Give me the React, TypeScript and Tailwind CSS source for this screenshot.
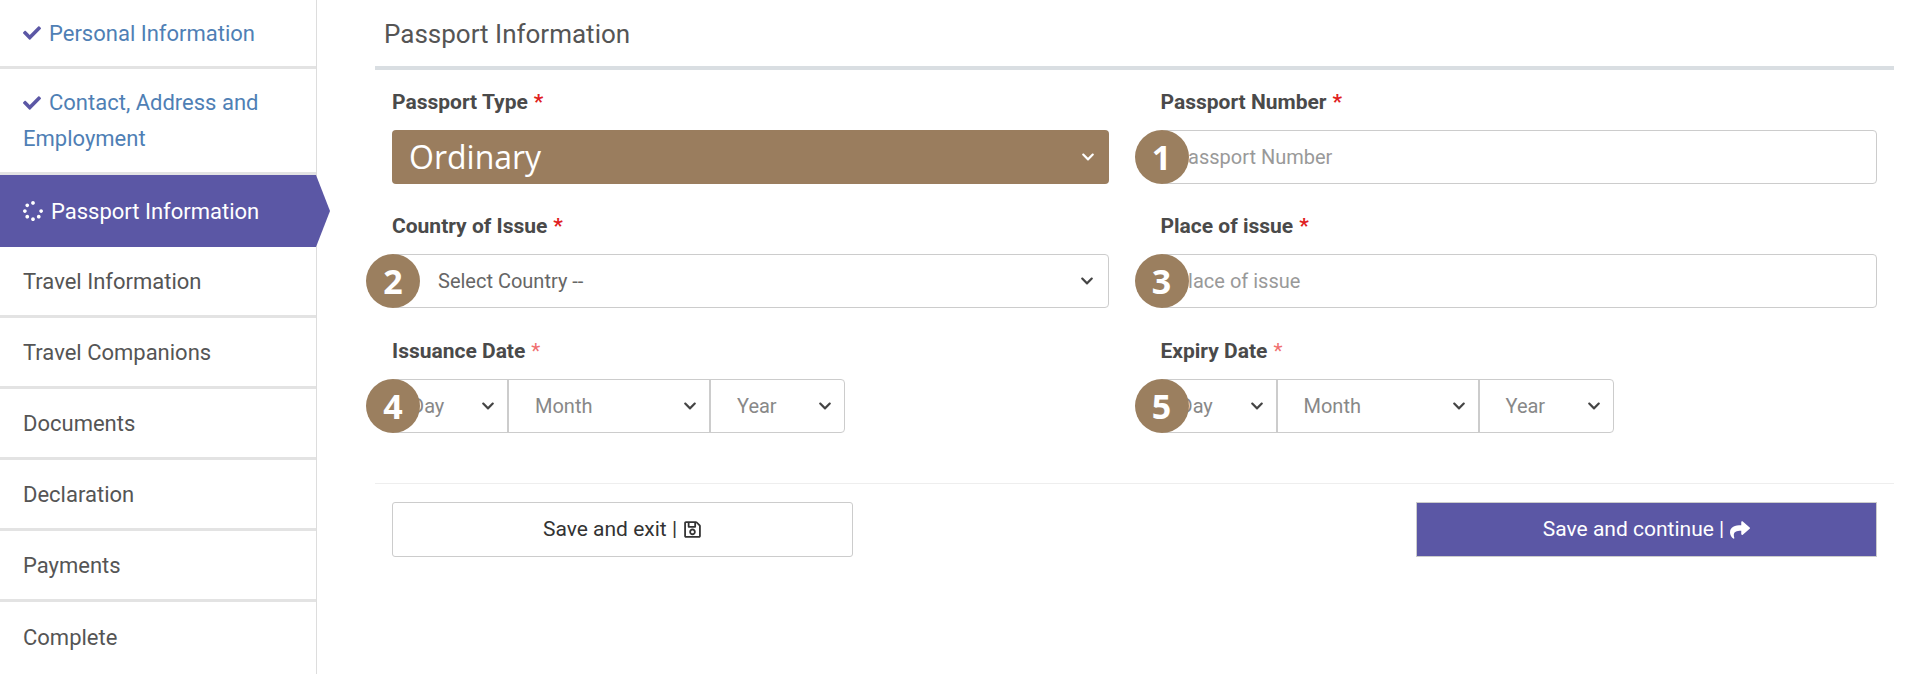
import React from "react";
import { FaCheck, FaSpinner, FaRegSave, FaShare, FaChevronDown } from "react-icons/fa";

const Badge = ({ n }: { n: number }) => (
  <div className="absolute left-0 top-1/2 -translate-x-1/2 -translate-y-1/2 w-[54px] h-[54px] rounded-full bg-[#9b7f5f] flex items-center justify-center text-white text-[34px] font-bold z-10" style={{ fontFamily: "'Open Sans', sans-serif" }}>
    {n}
  </div>
);

const Label = ({ t, light }: { t: string; light?: boolean }) => (
  <div className="h-[54px] flex items-center text-[21px] font-bold text-[#4a4a4a]">
    {t}
    <span className={`ml-[6px] ${light ? "text-[#f07070] font-normal" : "text-[#e02020]"}`}>*</span>
  </div>
);

const Chev = ({ c = "text-[#444]" }: { c?: string }) => <FaChevronDown className={`w-[14px] h-[14px] ${c}`} />;

const DateRow = ({ n }: { n: number }) => (
  <div className="relative flex h-[54px] w-[453px] border border-[#ccc] rounded-[4px] text-[20px] text-[#888] bg-white">
    <Badge n={n} />
    <div className="w-[116px] flex items-center justify-between pl-[18px] pr-[12px] border-r-2 border-[#ccc]"><span>Day</span><Chev /></div>
    <div className="w-[202px] flex items-center justify-between pl-[26px] pr-[12px] border-r-2 border-[#ccc]"><span>Month</span><Chev /></div>
    <div className="flex-1 flex items-center justify-between pl-[26px] pr-[12px]"><span>Year</span><Chev /></div>
  </div>
);

export default function App() {
  const rows = ["Travel Information", "Travel Companions", "Documents", "Declaration", "Payments", "Complete"];
  return (
    <div className="flex w-[1920px] h-[674px] bg-white overflow-hidden" style={{ fontFamily: "Roboto, 'Liberation Sans', sans-serif" }}>
      <div className="w-[317px] shrink-0 border-r border-[#ddd] text-[22px] relative">
        <div className="h-[69px] flex items-center pl-[23px] text-[#4f7fb5] border-b-[3px] border-[#e3e3e3]">
          <FaCheck className="w-[18px] h-[18px] text-[#5b57a5] mr-[8px]" />Personal Information
        </div>
        <div className="h-[106px] flex flex-col justify-center pl-[23px] text-[#4f7fb5] leading-[36px] border-b-[3px] border-[#e3e3e3]">
          <div className="flex items-center"><FaCheck className="w-[18px] h-[18px] text-[#5b57a5] mr-[8px]" />Contact, Address and</div>
          <div>Employment</div>
        </div>
        <div className="relative h-[72px] flex items-center pl-[23px] bg-[#5b57a5] text-white">
          <FaSpinner className="w-[20px] h-[20px] mr-[8px]" />Passport Information
          <div className="absolute right-[-14px] top-1/2 -translate-y-1/2 w-0 h-0 border-y-[36px] border-y-transparent border-l-[14px] border-l-[#5b57a5]" />
        </div>
        {rows.map((r, i) => (
          <div key={r} className={`h-[71px] flex items-center pl-[23px] text-[#555] ${i < rows.length - 1 ? "border-b-[3px] border-[#e3e3e3]" : ""}`}>{r}</div>
        ))}
      </div>
      <div className="flex-1 pl-[58px] pr-[26px]">
        <div className="h-[70px] flex items-end pb-[12px] pl-[9px] text-[26px] text-[#555] border-b-4 border-[#d9dee2]">Passport Information</div>
        <div className="px-[17px] grid grid-cols-2 gap-x-[52px] pt-[6px]">
          <div>
            <Label t="Passport Type" />
            <div className="h-[54px] rounded-[4px] bg-[#9a7d5e] flex items-center justify-between pl-[17px] pr-[14px] text-white text-[32px]" style={{ fontFamily: "'Open Sans', sans-serif" }}>
              <span>Ordinary</span><Chev c="text-white" />
            </div>
          </div>
          <div>
            <Label t="Passport Number" />
            <div className="relative h-[54px] border border-[#ccc] rounded-[4px] flex items-center pl-[14px] text-[20px] text-[#999]">
              <Badge n={1} />Passport Number
            </div>
          </div>
          <div className="mt-[16px]">
            <Label t="Country of Issue" />
            <div className="relative h-[54px] border border-[#ccc] rounded-[4px] flex items-center justify-between pl-[45px] pr-[14px] text-[20px] text-[#666]">
              <Badge n={2} /><span>Select Country --</span><Chev />
            </div>
          </div>
          <div className="mt-[16px]">
            <Label t="Place of issue" />
            <div className="relative h-[54px] border border-[#ccc] rounded-[4px] flex items-center pl-[14px] text-[20px] text-[#999]">
              <Badge n={3} />Place of issue
            </div>
          </div>
          <div className="mt-[17px]">
            <Label t="Issuance Date" light />
            <DateRow n={4} />
          </div>
          <div className="mt-[17px]">
            <Label t="Expiry Date" light />
            <DateRow n={5} />
          </div>
        </div>
        <div className="mt-[50px] border-t border-[#eee] px-[17px] pt-[18px] flex justify-between">
          <div className="w-[461px] h-[55px] border border-[#ccc] rounded-[3px] flex items-center justify-center text-[21px] text-[#333]">
            Save and exit |<FaRegSave className="ml-[6px] w-[19px] h-[19px]" />
          </div>
          <div className="w-[461px] h-[55px] bg-[#5b57a5] flex items-center justify-center text-[21px] text-white border border-[#ccc]">
            Save and continue |<FaShare className="ml-[6px] w-[20px] h-[20px]" />
          </div>
        </div>
      </div>
    </div>
  );
}
